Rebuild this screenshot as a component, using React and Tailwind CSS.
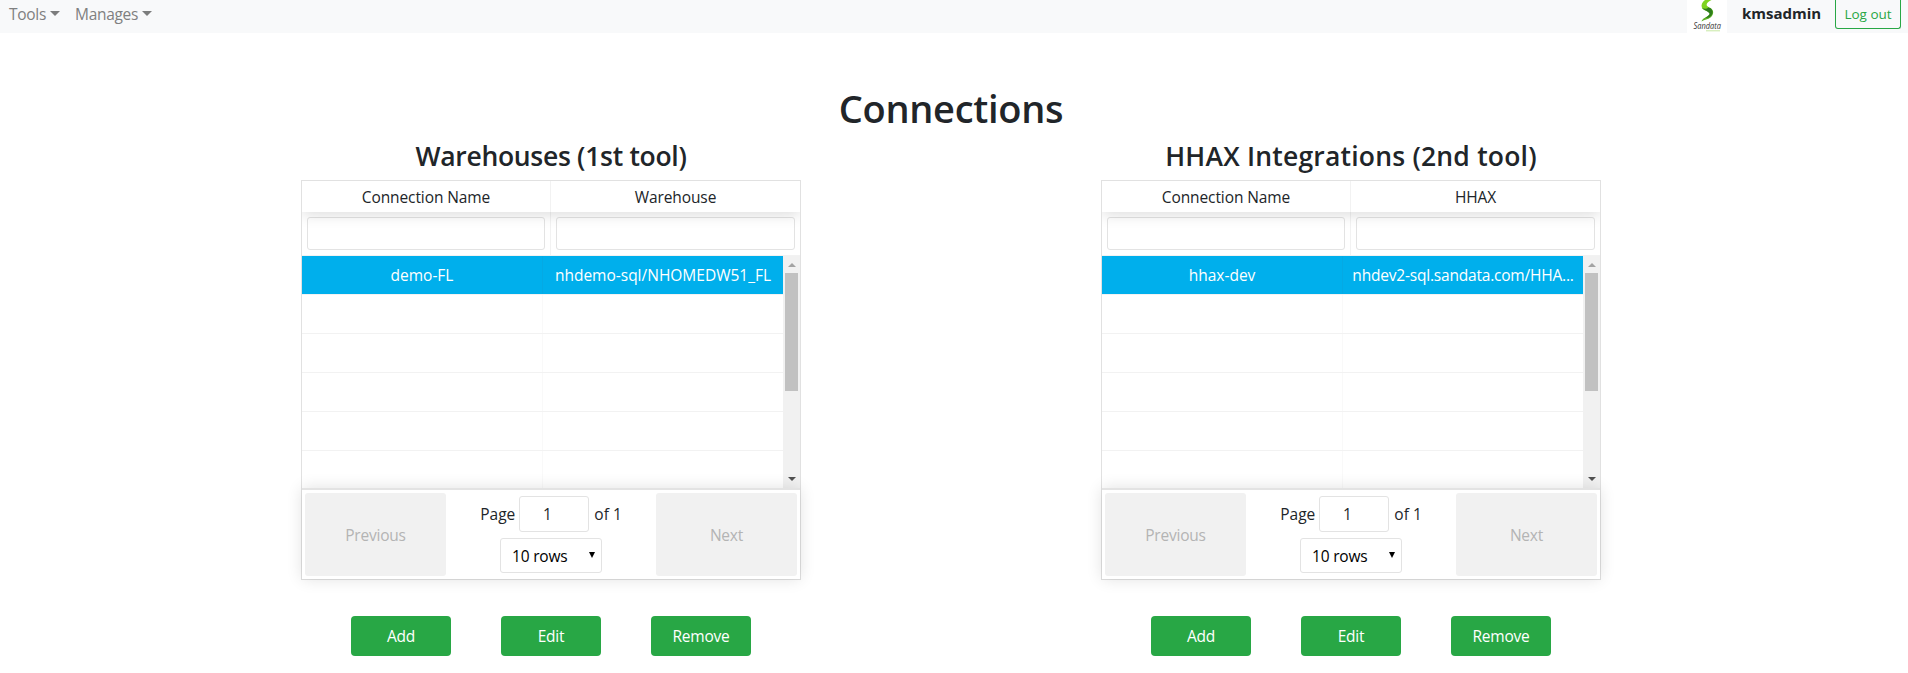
const rows = [0, 1, 2, 3, 4];

function Caret() {
  return <span className="mt-[-3px] ml-1 border-x-[5px] border-t-[5px] border-x-transparent border-t-[#7c7d7d]" />;
}

function NavItem({ label, className }) {
  return (
    <a className={"flex h-[28px] items-center pt-px text-[15.5px] tracking-[-0.3px] text-[#7f8080] " + className}>
      {label}
      <Caret />
    </a>
  );
}

function Logo() {
  return (
    <div className="flex h-[33px] w-10 flex-col items-center bg-white">
      <svg width="40" height="33" viewBox="0 0 40 33">
        <path d="M24.500 0H18C15 2 13.800 5 15 8C16.500 11 22 10.500 23.500 14C25 11.500 24 8.500 21.500 7C18.500 5.500 19 2.500 24.500 0Z" fill="#7ed321" />
        <path d="M22.500 7.500C27 9.500 27.500 14 23.500 17.500C21 19.500 17.500 19.500 14.500 21.500C15.500 17.500 20.500 17.500 22.300 14.500C23.500 12 22 10 22.500 7.500Z" fill="#5cb025" />
        <path d="M15 8C17 10.500 21.500 11 22.800 14C21.500 16 20 17 18 17.800C22 18.500 26 15.500 25.500 11.500C25 9 23.500 8 21.500 7.200C20 9 17.500 9.300 15 8Z" fill="#2f7d1c" />
        <text x="6.500" y="29.300" fontFamily="Open Sans, sans-serif" fontSize="8.200" fontStyle="italic" fill="#333" textLength="27.500" lengthAdjust="spacingAndGlyphs">Sandata</text>
        <path d="M19 30.800H33" stroke="#b9e28c" strokeWidth="0.800" />
      </svg>
    </div>
  );
}

function ScrollBar() {
  return (
    <div className="flex w-[17px] shrink-0 flex-col items-center justify-between bg-[#f1f1f1]">
      <div className="flex flex-col items-center">
        <span className="mt-[7px] mb-[6px] border-x-4 border-b-4 border-x-transparent border-b-[#a3a3a3]" />
        <div className="h-[118px] w-[13px] bg-[#c1c1c1]" />
      </div>
      <span className="mb-[7px] border-x-4 border-t-4 border-x-transparent border-t-[#505050]" />
    </div>
  );
}

function PageButton({ label }) {
  return (
    <button disabled className="flex h-[83px] w-[141px] items-center justify-center rounded-[3px] bg-[#f1f1f1] pt-[3px] text-[15.5px] tracking-[-0.2px] text-[#b4b4b4]">
      {label}
    </button>
  );
}

function Panel({ title, titleClass, second, name, value, valueClass }) {
  return (
    <section className="flex w-[500px] flex-col items-center">
      <h2 className={"flex h-[50px] items-center pt-[3px] whitespace-nowrap font-semibold " + titleClass}>{title}</h2>
      <div className="flex h-[400px] w-[500px] flex-col border border-[#e1e1e1]">
        <div className="relative z-10 flex h-[31px] shrink-0 text-[15.5px] tracking-[-0.1px] shadow-[0_2px_15px_0_rgba(0,0,0,0.15)] [clip-path:inset(0_0_-20px_0)]">
          <div className="flex w-[249px] items-center justify-center border-r border-[#f2f2f2] pt-[3px]">Connection Name</div>
          <div className="flex w-[249px] items-center justify-center pt-[3px]">{second}</div>
        </div>
        <div className="flex h-[44px] shrink-0 border-b border-[#f2f2f2]">
          <div className="w-[249px] border-r border-[#f2f2f2] px-[5px] pt-[5px]">
            <input className="block h-[33px] w-full rounded-[3px] border border-[#e3e3e3] bg-white" />
          </div>
          <div className="w-[249px] px-[5px] pt-[5px]">
            <input className="block h-[33px] w-full rounded-[3px] border border-[#e3e3e3] bg-white" />
          </div>
        </div>
        <div className="flex h-[232px] shrink-0 overflow-hidden">
          <div className="w-[481px]">
            <div className="flex h-[39px] border-b border-[#f2f2f2] bg-[#00afec] bg-clip-padding text-[15.5px] text-white">
              <div className="flex w-[241px] items-center justify-center border-r border-[#05a9e4] pt-[2px]">{name}</div>
              <div className={"flex w-[240px] items-center justify-center whitespace-nowrap pt-[2px] " + valueClass}>{value}</div>
            </div>
            {rows.map((row) => (
              <div key={row} className="flex h-[39px] border-b border-[#f2f2f2]">
                <div className="w-[241px] border-r border-[#f9f9f9]" />
              </div>
            ))}
          </div>
          <ScrollBar />
        </div>
        <div className="relative z-10 flex h-[91px] shrink-0 items-center justify-between border-t-2 border-[#e3e3e3] px-[3px] text-[15.5px] tracking-[-0.2px] shadow-[0_0_15px_0_rgba(0,0,0,0.12)]">
          <PageButton label="Previous" />
          <div className="flex flex-col items-center gap-[6px]">
            <div className="flex items-center">
              <span className="pt-[2px] tracking-[0px]">Page</span>
              <span className="mr-[5px] ml-1 flex h-9 w-[70px] items-center justify-center rounded-[3px] border border-[#e3e3e3] bg-white pt-[2px] pr-[14px]">1</span>
              <span className="pt-[2px] tracking-[0px]">of 1</span>
            </div>
            <div className="flex h-[35px] w-[102px] items-center justify-between rounded-[3px] border border-[#e3e3e3] pr-[6px] pl-[11px] text-black">
              <span className="pt-[2px]">10 rows</span>
              <span className="mb-[2px] border-x-[3px] border-t-[6px] border-x-transparent border-t-black" />
            </div>
          </div>
          <PageButton label="Next" />
        </div>
      </div>
      <div className="mt-9 flex gap-[50px]">
        {["Add", "Edit", "Remove"].map((label) => (
          <button key={label} className="h-10 w-[100px] rounded-[4px] bg-[#28a745] pt-[2px] text-[15.5px] tracking-[-0.2px] text-white">{label}</button>
        ))}
      </div>
    </section>
  );
}

export default function App() {
  return (
    <div className="h-[673px] w-full overflow-hidden bg-white font-['Open_Sans',sans-serif] text-[#212529]">
      <nav className="flex h-[33px] items-start bg-[#f8f9fa]">
        <NavItem label="Tools" className="ml-[9px]" />
        <NavItem label="Manages" className="ml-[15px]" />
        <div className="ml-auto flex items-start pr-[7px]">
          <Logo />
          <span className="mt-px ml-[15px] w-[78px] text-[15px] leading-6 font-bold">kmsadmin</span>
          <button className="ml-[15px] h-[29px] w-[66px] rounded-b-[3px] border border-t-0 border-[#28a745] text-[13.5px] text-[#28a745]">Log out</button>
        </div>
      </nav>
      <main className="flex flex-col items-center pt-[52px] pr-[6px]">
        <h1 className="h-[45px] text-[38px] leading-[46px] font-semibold tracking-[-0.3px]">Connections</h1>
        <div className="flex gap-[300px]">
          <Panel title="Warehouses (1st tool)" titleClass="text-[26.5px] tracking-[-0.3px]" second="Warehouse" name="demo-FL" value="nhdemo-sql/NHOMEDW51_FL" valueClass="" />
          <Panel title="HHAX Integrations (2nd tool)" titleClass="text-[26.5px] tracking-[0.2px]" second="HHAX" name="hhax-dev" value="nhdev2-sql.sandata.com/HHA..." valueClass="tracking-[-0.2px]" />
        </div>
      </main>
    </div>
  );
}
